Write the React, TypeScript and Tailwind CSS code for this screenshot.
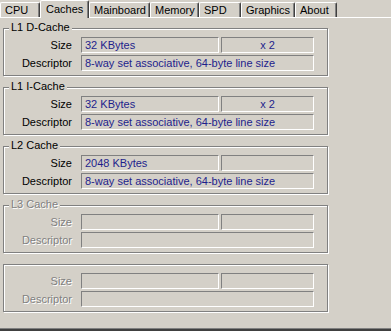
const FONT = "[font-family:'Liberation_Sans',Arial,sans-serif]";

const tabs = [
    { label: 'CPU', w: 'w-[40px]' },
    { label: 'Caches', w: 'w-[49px]', active: true },
    { label: 'Mainboard', w: 'w-[61px]' },
    { label: 'Memory', w: 'w-[49px]' },
    { label: 'SPD', w: 'w-[42px]' },
    { label: 'Graphics', w: 'w-[54px]' },
    { label: 'About', w: 'w-[42px]' },
];

type Cache = {
    title?: string;
    size?: string;
    ways?: string;
    desc?: string;
    disabled?: boolean;
};

const caches: Cache[] = [
    { title: 'L1 D-Cache', size: '32 KBytes', ways: 'x 2', desc: '8-way set associative, 64-byte line size' },
    { title: 'L1 I-Cache', size: '32 KBytes', ways: 'x 2', desc: '8-way set associative, 64-byte line size' },
    { title: 'L2 Cache', size: '2048 KBytes', ways: '', desc: '8-way set associative, 64-byte line size' },
    { title: 'L3 Cache', disabled: true },
    { disabled: true },
];

const Field = ({ w, children, center }: { w: string; children?: React.ReactNode; center?: boolean }) => (
    <div
        className={`${w} h-[16px] border border-t-[#808080] border-l-[#808080] border-b-white border-r-white text-[11px] leading-[14px] text-[#1e1e8c] whitespace-nowrap overflow-hidden ${center ? 'text-center' : 'pl-[3px]'}`}
    >
        {children}
    </div>
);

const CacheGroup = ({ c }: { c: Cache }) => {
    const labelCls = c.disabled
        ? 'text-[#808080] [text-shadow:1px_1px_0_#fff]'
        : 'text-black';
    return (
        <div className="relative ml-[3px] w-[325px] h-[48px] border border-[#808080] shadow-[inset_1px_1px_0_#fff,1px_1px_0_#fff] pt-[8px] flex flex-col gap-[2px]">
            {c.title && (
                <span className={`absolute left-[5px] -top-[8px] px-[2px] bg-[#d4d0c8] text-[11px] leading-[13px] ${labelCls}`}>
                    {c.title}
                </span>
            )}
            {/* Size row */}
            <div className="flex items-center">
                <span className={`w-[69px] pr-[1px] text-right text-[11px] leading-[14px] ${labelCls}`}>Size</span>
                <div className="ml-[8px] flex gap-[2px]">
                    <Field w="w-[138px]">{c.size}</Field>
                    <Field w="w-[93px]" center>{c.ways}</Field>
                </div>
            </div>
            {/* Descriptor row */}
            <div className="flex items-center">
                <span className={`w-[69px] pr-[1px] text-right text-[11px] leading-[14px] ${labelCls}`}>Descriptor</span>
                <div className="ml-[8px]">
                    <Field w="w-[233px]">{c.desc}</Field>
                </div>
            </div>
        </div>
    );
};

export default function App() {
    return (
        <div className={`${FONT} w-[391px] h-[331px] overflow-hidden bg-[#d4d0c8] flex flex-col`}>
            {/* Tab strip */}
            <div className="flex items-end h-[18px] border-b border-white">
                {tabs.map((t) =>
                    t.active ? (
                        <div
                            key={t.label}
                            className={`${t.w} relative z-10 -mb-px h-[18px] bg-[#d4d0c8] border-l border-t border-white border-r border-r-[#404040] shadow-[inset_-1px_0_0_#808080] rounded-t-[2px] pl-[5px] pt-[1px] text-[11px] leading-[14px] text-black`}
                        >
                            {t.label}
                        </div>
                    ) : (
                        <div
                            key={t.label}
                            className={`${t.w} h-[15px] border-l border-t border-white border-r border-r-[#404040] shadow-[inset_-1px_0_0_#808080] rounded-t-[2px] pl-[4px] pt-[1px] text-[11px] leading-[13px] text-black`}
                        >
                            {t.label}
                        </div>
                    )
                )}
            </div>

            {/* Panel */}
            <div className="flex-1 border-b-2 border-b-[#404040] shadow-[inset_0_-1px_0_#808080] pt-[10px] flex flex-col gap-[11px]">
                {caches.map((c, i) => (
                    <CacheGroup key={i} c={c} />
                ))}
            </div>
        </div>
    );
}
